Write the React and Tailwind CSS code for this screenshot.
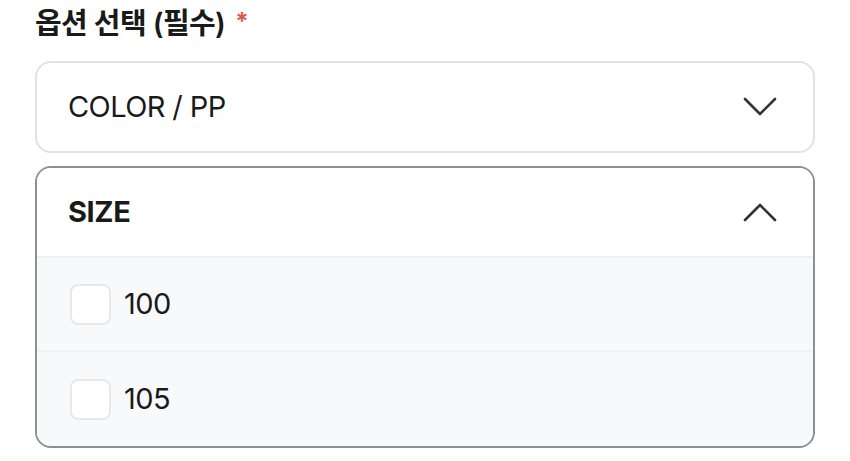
const sizes = ['100', '105'];

function Chevron({ up }) {
  return (
    <svg width="34" height="20" viewBox="0 0 34 20" fill="none" stroke="#333" strokeWidth="2.6" strokeLinecap="round" strokeLinejoin="round">
      <path d={up ? 'M2 18L17 3L32 18' : 'M2 2L17 17L32 2'} />
    </svg>
  );
}

export default function App() {
  return (
    <div
      className="w-[850px] h-[461px] bg-white px-[35px] overflow-hidden"
      style={{ fontFamily: 'Inter, "Noto Sans CJK KR", sans-serif' }}
    >
      {/* Label */}
      <div className="h-[48px] flex items-center gap-[10px]">
        <span className="text-[29px] font-semibold text-[#1a1a1a] tracking-[-0.6px]">옵션 선택 (필수)</span>
        <span className="text-[24px] font-bold text-[#e2574c] leading-none mt-[-4px]">*</span>
      </div>

      {/* Collapsed select */}
      <div className="mt-[13px] h-[92px] rounded-[16px] border-2 border-[#e2e2e2] flex items-center justify-between pl-[31px] pr-[36px]">
        <span className="text-[29px] text-[#1a1a1a] tracking-[-0.6px]">COLOR / PP</span>
        <Chevron />
      </div>

      {/* Expanded select */}
      <div className="mt-[13px] rounded-[16px] border-2 border-[#8f8f8f] overflow-hidden">
        <div className="h-[90px] bg-white flex items-center justify-between pl-[31px] pr-[36px] border-b-2 border-[#eef0f3]">
          <span className="text-[29px] font-bold text-[#1a1a1a] tracking-[-0.4px]">SIZE</span>
          <Chevron up />
        </div>
        <div className="bg-[#f8f9fb]">
          {sizes.map((s, i) => (
            <div
              key={s}
              className={`h-[94px] flex items-center gap-[13px] pl-[33px] ${i === 0 ? 'border-b-2 border-[#f0f2f5]' : ''}`}
            >
              <div className="w-[41px] h-[41px] rounded-[8px] border-2 border-[#e8e8e8] bg-white" />
              <span className="text-[29px] text-[#1a1a1a] tracking-[-0.5px]">{s}</span>
            </div>
          ))}
        </div>
      </div>
    </div>
  );
}
